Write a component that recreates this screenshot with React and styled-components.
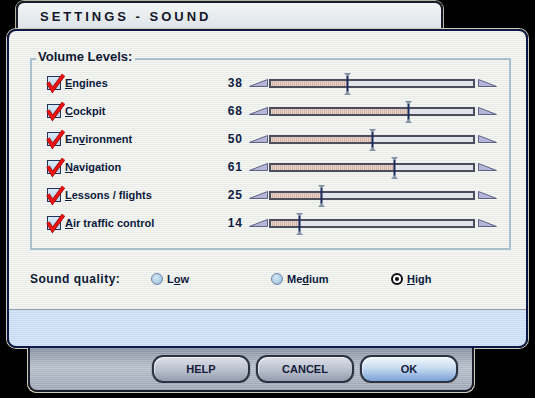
import { useState } from "react";
import styled, { createGlobalStyle } from "styled-components";

const GlobalStyle = createGlobalStyle`
  html, body {
    margin: 0;
    background: #000;
  }
  body {
    font-family: "Liberation Sans", Arial, sans-serif;
  }
`;

const Screen = styled.div`
  width: 535px;
  height: 398px;
  padding-top: 1px;
  box-sizing: border-box;
  display: flex;
  flex-direction: column;
  overflow: hidden;
`;

const TitleTab = styled.div`
  margin-left: 16px;
  width: 427px;
  height: 28px;
  box-sizing: border-box;
  border: 2px solid #1a1c2a;
  border-bottom: none;
  border-radius: 8px 8px 0 0;
  box-shadow: 0 0 0 1px #b4b2a4;
  background: linear-gradient(#f2f5f6, #dde4e8);
  padding-left: 22px;
  display: flex;
  align-items: center;
  font-weight: bold;
  font-size: 13px;
  letter-spacing: 3px;
  color: #14162a;
`;

const Panel = styled.div`
  margin-left: 7px;
  width: 521px;
  box-sizing: border-box;
  border: 2px solid #0c1848;
  border-radius: 9px;
  box-shadow: 0 0 0 1px #cfcbb6;
  overflow: hidden;
  display: flex;
  flex-direction: column;
`;

const Content = styled.div`
  height: 279px;
  box-sizing: border-box;
  padding: 18px 15px 0 21px;
  background: repeating-linear-gradient(to bottom, #f6f7f3 0 1px, #e8ebe7 1px 2px);
  border-bottom: 1px solid #9aa2a8;
`;

const Band = styled.div`
  height: 36px;
  background: repeating-linear-gradient(to bottom, #c9dcf3 0 1px, #d6e6f8 1px 2px);
`;

const Group = styled.fieldset`
  margin: 0;
  padding: 0 0 11px 15px;
  width: 481px;
  min-inline-size: 0;
  box-sizing: border-box;
  border: 2px solid #a6c0cd;
  display: flex;
  flex-direction: column;
`;

const Legend = styled.legend`
  margin-left: -11px;
  padding: 0 3px 5px 2px;
  font-size: 13px;
  line-height: 15px;
  font-weight: bold;
  color: #0e1834;
`;

const Row = styled.div`
  display: flex;
  align-items: center;
  height: 28px;
`;

const CheckBox = styled.span`
  position: relative;
  flex: none;
  width: 14px;
  height: 14px;
  box-sizing: border-box;
  border: 1px solid #26325a;
  background: linear-gradient(#d8eaf8, #b6d2ec);
  cursor: pointer;
`;

const CheckMark = styled.svg`
  position: absolute;
  left: -2px;
  top: -3px;
  width: 18px;
  height: 18px;
  overflow: visible;
`;

const Label = styled.span`
  margin-left: 4px;
  width: 153px;
  font-size: 11px;
  font-weight: bold;
  color: #0c1a3e;
`;

const Key = styled.u`
  text-decoration-thickness: 1px;
  text-underline-offset: 1px;
`;

const Value = styled.span`
  width: 25px;
  text-align: right;
  font-size: 12px;
  font-weight: bold;
  letter-spacing: 1px;
  color: #0e1c44;
`;

const Ramp = styled.svg`
  flex: none;
  width: 19px;
  height: 8px;
  margin-left: ${(p) => p.$gap}px;
`;

const Track = styled.div`
  position: relative;
  flex: none;
  margin-left: 1px;
  width: 206px;
  height: 9px;
  box-sizing: border-box;
  border: 2px solid #4c4e5e;
  background: #e3e4eb;
`;

const Fill = styled.div`
  height: 100%;
  background: repeating-linear-gradient(to right, #e9d4c9 0 1px, #d2b3aa 1px 2px);
`;

const Thumb = styled.svg`
  position: absolute;
  top: -8px;
  width: 7px;
  height: 22px;
  margin-left: -3.5px;
`;

const QualityRow = styled.div`
  margin-top: 19px;
  height: 20px;
  display: flex;
  align-items: center;
`;

const QualityLabel = styled.span`
  width: 123px;
  font-size: 12px;
  font-weight: bold;
  letter-spacing: 0.5px;
  color: #0e1834;
`;

const Option = styled.label`
  width: 122px;
  display: flex;
  align-items: center;
  gap: 4px;
  font-size: 11px;
  font-weight: bold;
  color: #0c1a3e;
  cursor: pointer;
`;

const Radio = styled.span`
  position: relative;
  flex: none;
  width: 12px;
  height: 12px;
  box-sizing: border-box;
  border-radius: 50%;
  border: ${(p) => (p.$on ? "2px solid #101014" : "1px solid #6f88a4")};
  background: ${(p) =>
    p.$on ? "#fff" : "radial-gradient(circle at 40% 35%, #d6e8f6, #93b7d7)"};

  &::after {
    content: "";
    display: ${(p) => (p.$on ? "block" : "none")};
    position: absolute;
    left: 50%;
    top: 50%;
    width: 4px;
    height: 4px;
    margin: -2px 0 0 -2px;
    border-radius: 50%;
    background: #101014;
  }
`;

const Tray = styled.div`
  margin-left: 28px;
  width: 446px;
  height: 44px;
  box-sizing: border-box;
  border: 2px solid #1a1e2c;
  border-top: none;
  border-radius: 0 0 9px 9px;
  box-shadow: 1px 1px 0 0 #cfcbb6, -1px 1px 0 0 #cfcbb6;
  background: repeating-linear-gradient(
      to bottom,
      rgba(255, 255, 255, 0.14) 0 1px,
      rgba(0, 0, 0, 0.05) 1px 2px
    ),
    linear-gradient(#8a94a6, #bcc3cf 45%, #a3acbb);
  display: flex;
  justify-content: flex-end;
  gap: 6px;
  padding: 7px 14px 0 0;
`;

const Button = styled.button`
  width: 98px;
  height: 28px;
  padding: 0;
  border: 2px solid #2c3242;
  border-radius: 11px;
  box-shadow: 0 0 0 1px #a4acba, inset 1px 1px 0 rgba(255, 255, 255, 0.6);
  background: ${(p) =>
    p.$primary
      ? "linear-gradient(#f2f7fc, #c9dcf2 45%, #7aa2d6)"
      : "linear-gradient(#dde1ea, #bcc2ce 50%, #959dae)"};
  font: bold 11px "Liberation Sans", Arial, sans-serif;
  color: #141c3a;
  cursor: pointer;
`;

const channels = [
  { label: "Engines", key: 0, value: 38 },
  { label: "Cockpit", key: 0, value: 68 },
  { label: "Environment", key: 2, value: 50 },
  { label: "Navigation", key: 0, value: 61 },
  { label: "Lessons / flights", key: 0, value: 25 },
  { label: "Air traffic control", key: 0, value: 14 },
];

const qualities = [
  { id: "low", label: "Low", key: 1 },
  { id: "medium", label: "Medium", key: 2 },
  { id: "high", label: "High", key: 0 },
];

const Underlined = ({ text, at }) => (
  <span>
    {text.slice(0, at)}
    <Key>{text[at]}</Key>
    {text.slice(at + 1)}
  </span>
);

const App = () => {
  const [enabled, setEnabled] = useState(channels.map(() => true));
  const [quality, setQuality] = useState("high");

  const toggle = (i) =>
    setEnabled((list) => list.map((on, j) => (j === i ? !on : on)));

  return (
    <Screen>
      <GlobalStyle />
      <TitleTab>SETTINGS - SOUND</TitleTab>
      <Panel>
        <Content>
          <Group>
            <Legend>Volume Levels:</Legend>
            {channels.map((c, i) => (
              <Row key={c.label}>
                <CheckBox onClick={() => toggle(i)}>
                  {enabled[i] && (
                    <CheckMark viewBox="0 0 18 18">
                      <path
                        d="M2 8.5 L6.5 16 L17.5 1"
                        fill="none"
                        stroke="#9c0a0a"
                        strokeWidth="4"
                      />
                      <path
                        d="M2 8.5 L6.5 16 L17.5 1"
                        fill="none"
                        stroke="#f01212"
                        strokeWidth="2.6"
                      />
                    </CheckMark>
                  )}
                </CheckBox>
                <Label>
                  <Underlined text={c.label} at={c.key} />
                </Label>
                <Value>{c.value}</Value>
                <Ramp $gap={6} viewBox="0 0 19 8">
                  <polygon
                    points="0.5,7.5 18.5,0.5 18.5,7.5"
                    fill="#b6b6da"
                    stroke="#5e6080"
                    strokeWidth="1"
                  />
                </Ramp>
                <Track>
                  <Fill style={{ width: `${c.value}%` }} />
                  <Thumb style={{ left: `${c.value}%` }} viewBox="0 0 7 22">
                    <polygon points="0,0 7,0 3.5,4" fill="#8494a6" />
                    <rect x="2.5" y="3" width="2" height="16" fill="#1a2a5c" />
                    <polygon points="0,22 7,22 3.5,18" fill="#8494a6" />
                  </Thumb>
                </Track>
                <Ramp $gap={3} viewBox="0 0 19 8">
                  <polygon
                    points="0.5,0.5 18.5,7.5 0.5,7.5"
                    fill="#b6b6da"
                    stroke="#5e6080"
                    strokeWidth="1"
                  />
                </Ramp>
              </Row>
            ))}
          </Group>
          <QualityRow>
            <QualityLabel>Sound quality:</QualityLabel>
            {qualities.map((q) => (
              <Option key={q.id} onClick={() => setQuality(q.id)}>
                <Radio $on={quality === q.id} />
                <Underlined text={q.label} at={q.key} />
              </Option>
            ))}
          </QualityRow>
        </Content>
        <Band />
      </Panel>
      <Tray>
        <Button>HELP</Button>
        <Button>CANCEL</Button>
        <Button $primary>OK</Button>
      </Tray>
    </Screen>
  );
};

export default App;
